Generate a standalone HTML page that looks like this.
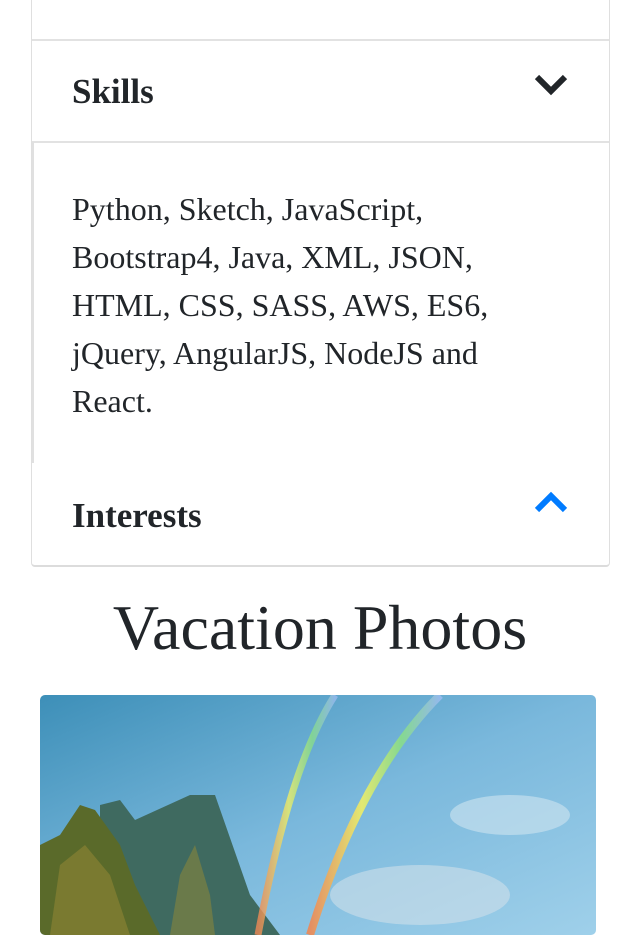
<!DOCTYPE html>
<html><head><style>
*{margin:0;padding:0;box-sizing:border-box}
body{width:640px;height:926px;overflow:hidden;background:#fff;font-family:"Liberation Serif",serif;color:#212529;position:relative}
.card{position:absolute;left:31px;top:-10px;width:579px;height:577px;border:1px solid #dfdfdf;border-top:none;border-radius:0 0 4px 4px;border-bottom:2px solid #dcdcdc}
.hl{position:absolute;left:0;right:0;height:2px;background:#e2e2e2}
.h{position:absolute;left:40px;font-weight:bold;font-size:35px}
.body{position:absolute;left:0;top:152px;height:321px;width:2px;background:#e0e0e0}
.txt{position:absolute;left:40px;top:195px;font-size:32px;line-height:48px;width:470px}
h1{position:absolute;left:0;width:640px;top:592px;text-align:center;font-weight:normal;font-size:64px;line-height:72px}
.img{position:absolute;left:40px;top:695px;width:556px;height:240px;border-radius:5px;overflow:hidden}
</style></head><body>
<div class="card">
<div class="hl" style="top:49px"></div>
<div class="h" style="top:82px">Skills</div>
<svg style="position:absolute;left:502px;top:84px" width="34" height="24"><path d="M3 3 L17 17 L31 3" fill="none" stroke="#212529" stroke-width="6"/></svg>
<div class="hl" style="top:151px"></div>
<div class="body"></div>
<div class="txt">Python, Sketch, JavaScript, Bootstrap4, Java, XML, JSON, HTML, CSS, SASS, AWS, ES6, jQuery, AngularJS, NodeJS and React.</div>
<div class="h" style="top:506px">Interests</div>
<svg style="position:absolute;left:502px;top:500px" width="34" height="24"><path d="M3 20 L17 6 L31 20" fill="none" stroke="#007bff" stroke-width="6"/></svg>
</div>
<h1>Vacation Photos</h1>
<div class="img">
<svg width="556" height="240" viewBox="0 0 556 240">
<defs><linearGradient id="s" x1="0" y1="0" x2="1" y2="1"><stop offset="0" stop-color="#3d8fb8"/><stop offset="0.5" stop-color="#7ab8dc"/><stop offset="1" stop-color="#9fd0ea"/></linearGradient>
<linearGradient id="r" x1="0" x2="1"><stop offset="0" stop-color="#e85"/><stop offset="0.4" stop-color="#ee6"/><stop offset="0.7" stop-color="#8d8"/><stop offset="1" stop-color="#9be"/></linearGradient></defs>
<rect width="556" height="240" fill="url(#s)"/>
<ellipse cx="470" cy="120" rx="60" ry="20" fill="#cfe4f0" opacity="0.6"/>
<ellipse cx="380" cy="200" rx="90" ry="30" fill="#cfe0ea" opacity="0.6"/>
<path d="M60 240 L60 110 L80 105 L95 125 L150 100 L175 100 L210 200 L240 240Z" fill="#3f6a60"/>
<path d="M140 180 L155 150 L170 200 L175 240 L130 240Z" fill="#6a7a4a"/>
<path d="M0 240 L0 150 L20 140 L40 110 L55 115 L80 150 L95 190 L120 240Z" fill="#5a6a2a"/>
<path d="M10 240 L20 170 L45 150 L70 180 L90 240Z" fill="#7a7a30"/>
<path d="M218 240 Q250 70 295 0" fill="none" stroke="url(#r)" stroke-width="7" opacity="0.8"/>
<path d="M270 240 Q320 80 400 0" fill="none" stroke="url(#r)" stroke-width="8" opacity="0.9"/>
</svg>
</div>
</body></html>
